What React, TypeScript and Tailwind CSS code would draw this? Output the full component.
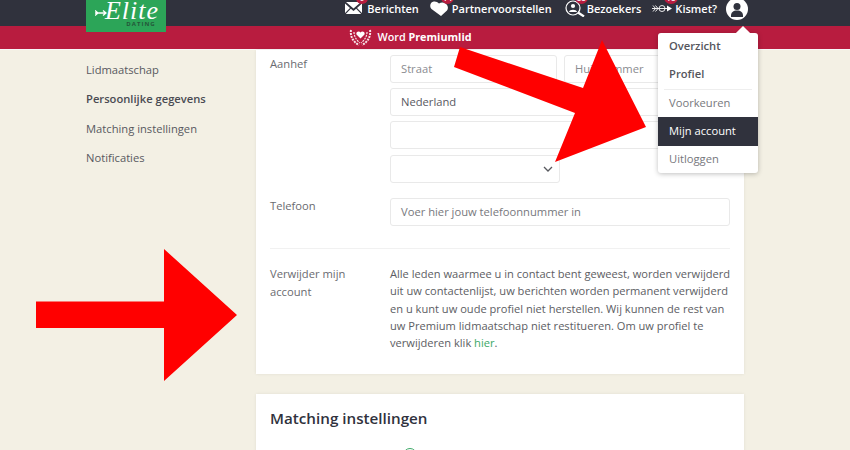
import React from "react";

function Logo() {
  return (
    <div className="relative w-[80px] h-[32px] bg-[#2ca558] flex flex-col items-center shrink-0 overflow-hidden">
      <div className="flex items-center h-[21px] pl-[2px]">
        <svg width="12" height="14" viewBox="0 0 12 14" fill="none" stroke="#fff" strokeWidth="1.300" className="mt-[4px] -mr-[2px]">
          <path d="M0 7h11M0 4.500l3 2.500-3 2.500M8 4.500l3 2.500-3 2.500" />
        </svg>
        <div className="text-white text-[26px] leading-[21px] italic tracking-[1px]" style={{ fontFamily: '"Liberation Serif", serif' }}>Elite</div>
      </div>
      <div className="text-[#24573a] text-[6px] font-bold tracking-[1px] leading-[6px] pl-[30px]">DATING</div>
    </div>
  );
}

function Badge({ n, left }: { n: string; left: string }) {
  return (
    <span className={`absolute top-[-9px] ${left} min-w-[12px] h-[13px] rounded-full bg-[#b81c3f] text-white text-[8px] font-semibold leading-[13px] text-center px-[2px]`}>{n}</span>
  );
}

function NavItem({ icon, label, badge, left, gap }: { icon: React.ReactNode; label: string; badge: string; left: string; gap: string }) {
  return (
    <div className={`relative flex items-center h-[16px] ${gap}`}>
      {icon}
      <Badge n={badge} left={left} />
      <span className="text-white text-[11px] font-semibold leading-none">{label}</span>
    </div>
  );
}

const Mail = (
  <svg width="17" height="13" viewBox="0 0 17 13" fill="#fff"><path d="M1 0h15L8.500 6.500zM0 1.500l5 4.500-5 5zM17 1.500v9.500l-5-5zM5.800 6.800l2.700 2.200 2.700-2.200 5 5.200H.8z" /></svg>
);
const Heart = (
  <svg width="18" height="15" viewBox="0 0 18 15" fill="#fff"><path d="M11 15 1.500 8C-.8 5.500.2 1.500 3 .7 5.200.1 7.500.8 9 2.500 11 1 13.500 1 15.500 2.500c2.800 2 3 5 1.500 7z" /></svg>
);
const Search = (
  <svg width="20" height="17" viewBox="0 0 20 17" fill="none" stroke="#fff" strokeWidth="1.200"><circle cx="8" cy="8" r="7" /><circle cx="8" cy="6" r="2.100" fill="#fff" stroke="none" /><path d="M4 12c.5-3 7.500-3 8 0z" fill="#fff" stroke="none" /><path d="m13 12.500 6 4" strokeWidth="2.200" /></svg>
);
const ArrowIcon = (
  <svg width="20" height="11" viewBox="0 0 20 11" fill="none" stroke="#fff" strokeWidth="0.900"><path d="M0 5.500h15M1 2.500l2.500 3-2.500 3M3.500 2.500l2.500 3-2.500 3" /><circle cx="10" cy="5.500" r="3" /><path d="m15 2.500 5 3-5 3z" fill="#fff" stroke="none" /></svg>
);

function Field({ children, className = "" }: { children?: React.ReactNode; className?: string }) {
  return (
    <div className={`h-[28px] border border-[#e9e9e9] rounded-[3px] bg-white flex items-center pl-[10px] text-[11.200px] ${className}`}>{children}</div>
  );
}

function Arrows() {
  return (
    <svg className="absolute left-0 top-0 pointer-events-none" width="850" height="450" viewBox="0 0 850 450" fill="#ff0000">
      <path d="M36 301.500H164V249L237 315 164 381V328H36z" />
      <path d="M460 47 583 88 602 40 646 127 555 162 575 113 454 67z" />
    </svg>
  );
}

function Wreath() {
  return (
    <svg width="23" height="17" viewBox="0 0 23 17" fill="none" stroke="#f6e3e7" strokeWidth="2" strokeDasharray="2 1">
      <path d="M2 1c-1 6 2 12 8 15M21 1c1 6-2 12-8 15" />
      <path d="M5 3c0 4 2 8 6 11M18 3c0 4-2 8-6 11" strokeWidth="1.200" />
      <path d="M11.500 9.500 7.500 5.500C6.500 3 10 1.500 11.500 3.500 13 1.500 16.500 3 15.500 5.500z" fill="#fff" stroke="none" />
    </svg>
  );
}

export default function App() {
  return (
    <div className="relative w-[850px] h-[450px] overflow-hidden bg-[#f3f0e4] text-[#58595f]" style={{ fontFamily: '"Open Sans", sans-serif' }}>
      <header className="h-[26px] bg-[#30323d] flex items-start pl-[86px] pr-[102px] justify-between relative z-10">
        <Logo />
        <nav className="flex items-center h-[16px]">
          <NavItem icon={Mail} label="Berichten" badge="9" left="left-[11px]" gap="gap-[5px] mr-[11px]" />
          <NavItem icon={Heart} label="Partnervoorstellen" badge="14" left="left-[11px]" gap="gap-[4px] mr-[13px]" />
          <NavItem icon={Search} label="Bezoekers" badge="88" left="left-[10px]" gap="gap-[2px] mr-[11px]" />
          <NavItem icon={ArrowIcon} label="Kismet?" badge="18" left="left-[12px]" gap="gap-[3px] mr-[9px]" />
          <div className="w-[22px] h-[22px] rounded-full bg-white flex items-center justify-center mt-[2px]">
            <svg width="14" height="15" viewBox="0 0 14 15" fill="#30323d"><circle cx="7" cy="4.500" r="3.500" /><path d="M1 15c-.5-5 2.500-6.500 6-6.500s6.500 1.500 6 6.500z" /></svg>
          </div>
        </nav>
      </header>
      <div className="h-[24px] bg-[#b81c3f] border-b border-[#f7f7f7] flex items-center justify-center text-white text-[10.800px] gap-[5px] pr-[29px]">
        <Wreath />
        <span className="font-semibold">Word <b className="font-bold">Premiumlid</b></span>
      </div>
      <div className="flex pl-[86px] items-start">
        <aside className="w-[170px] shrink-0 pt-[5px] text-[11.200px] flex flex-col">
          <div className="h-[29px] leading-[29px]">Lidmaatschap</div>
          <div className="h-[30px] leading-[30px] font-semibold text-[#4a4b52]">Persoonlijke gegevens</div>
          <div className="h-[29px] leading-[29px]">Matching instellingen</div>
          <div className="h-[29px] leading-[29px]">Notificaties</div>
        </aside>
        <main className="w-[488px] flex flex-col gap-[20px]">
          <section className="bg-white h-[324px] px-[14px] shadow-[0_0_3px_rgba(0,0,0,0.08)] text-[11.200px]">
            <div className="flex pt-[5px]">
              <div className="w-[120px] shrink-0 text-[#6a6b70] leading-[17px]">Aanhef</div>
              <div className="flex flex-col gap-[5px] flex-1">
                <div className="flex gap-[7px]">
                  <Field className="w-[167px] text-[#8a8b90]">Straat</Field>
                  <Field className="flex-1 text-[#8a8b90]">Huisnummer</Field>
                </div>
                <Field>Nederland</Field>
                <Field />
                <Field className="w-[170px] justify-end pr-[6px] mt-[1px]">
                  <svg width="10" height="6" viewBox="0 0 10 6" fill="none" stroke="#58595f" strokeWidth="1.300"><path d="m1 1 4 4 4-4" /></svg>
                </Field>
              </div>
            </div>
            <div className="flex mt-[15px]">
              <div className="w-[120px] shrink-0 text-[#6a6b70] leading-[15px]">Telefoon</div>
              <Field className="flex-1 text-[#77787d]">Voer hier jouw telefoonnummer in</Field>
            </div>
            <div className="h-px bg-[#f1f1f1] mt-[22px]" />
            <div className="flex mt-[16px]">
              <div className="w-[120px] shrink-0 text-[#6a6b70] leading-[17.500px]">Verwijder mijn<br />account</div>
              <p className="flex-1 text-[11.100px] leading-[17.300px] text-[#5c5d63] whitespace-nowrap">
                Alle leden waarmee u in contact bent geweest, worden verwijderd<br />
                uit uw contactenlijst, uw berichten worden permanent verwijderd<br />
                en u kunt uw oude profiel niet herstellen. Wij kunnen de rest van<br />
                uw Premium lidmaatschap niet restitueren. Om uw profiel te<br />
                verwijderen klik <span className="text-[#3ba866]">hier</span>.
              </p>
            </div>
          </section>
          <section className="bg-white h-[100px] px-[14px] pt-[14px] shadow-[0_0_3px_rgba(0,0,0,0.08)]">
            <h2 className="text-[15.200px] font-semibold text-[#30323d] leading-[20px]">Matching instellingen</h2>
            <div className="w-[14px] h-[14px] rounded-full border border-[#3ba866] ml-[133px] mt-[20px]" />
          </section>
        </main>
      </div>
      <Arrows />
      <div className="absolute left-[658px] top-[33px] w-[100px] h-[140px] bg-white rounded-[3px] shadow-[0_1px_5px_rgba(0,0,0,0.25)] text-[11.200px] z-20">
        <div className="absolute -top-[5px] left-[80px] w-[10px] h-[10px] bg-white rotate-45" />
        <div className="relative h-[28px] leading-[26px] pl-[11px] font-semibold text-[#55565c]">Overzicht</div>
        <div className="h-[28px] leading-[26px] pl-[11px] font-semibold text-[#55565c]">Profiel</div>
        <div className="mx-[6px] h-px bg-[#eeeeee]" />
        <div className="h-[27px] leading-[26px] pl-[11px] text-[#77787d]">Voorkeuren</div>
        <div className="h-[29px] leading-[28px] pl-[11px] bg-[#30323d] text-white font-medium">Mijn account</div>
        <div className="h-[27px] leading-[26px] pl-[11px] text-[#77787d]">Uitloggen</div>
      </div>
    </div>
  );
}
